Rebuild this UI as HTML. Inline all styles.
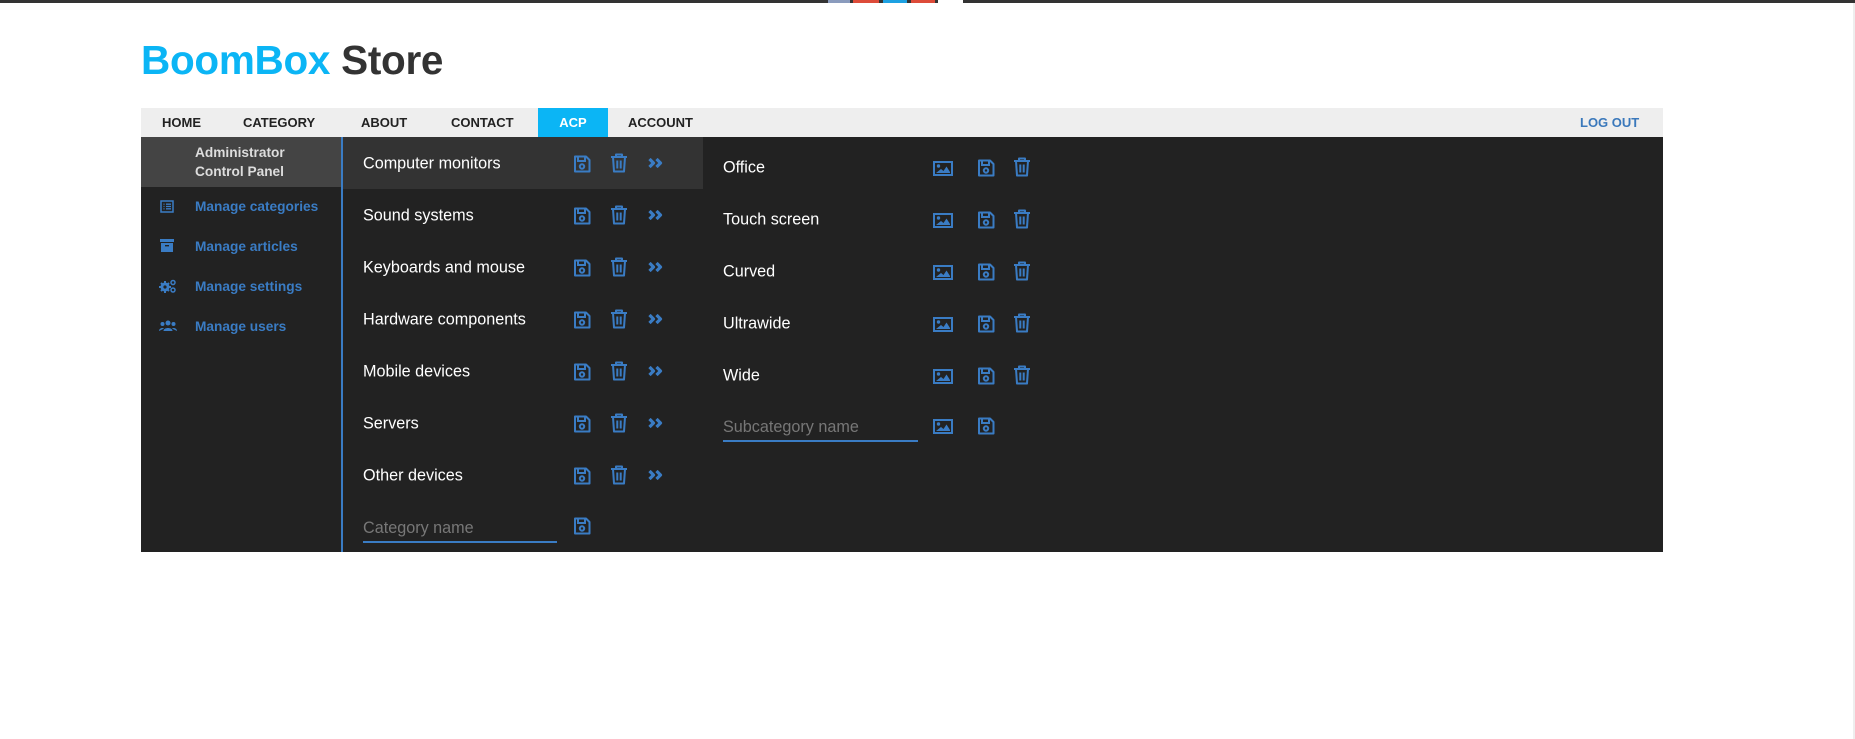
<!DOCTYPE html>
<html><head><meta charset="utf-8"><style>
*{margin:0;padding:0;box-sizing:border-box}
html,body{width:1855px;height:739px;overflow:hidden;background:#fff;font-family:"Liberation Sans",Arial,sans-serif}
.a{position:absolute}
.nav span{position:absolute;top:0;height:29px;line-height:29px;font-size:13px;font-weight:bold;color:#222}
.t{position:absolute;color:#fff;font-size:16.2px;transform:translateY(-50%)}
.sb{position:absolute;color:#3a7cc4;font-size:13.7px;font-weight:bold}
svg.i{position:absolute}
.ph{position:absolute;color:#777;font-size:16.2px}
.ul{position:absolute;height:2px;background:#3a7cc4}
</style></head><body>
<svg width="0" height="0" style="position:absolute"><defs>
<symbol id="sv" viewBox="0 0 18 18"><path d="M2 1.5h11l3.5 3.5v11.5h-14.5z" fill="none" stroke="#3a7cc4" stroke-width="2" stroke-linejoin="round"/><path d="M5 1.5v4.5h7v-4.5" fill="none" stroke="#3a7cc4" stroke-width="2"/><circle cx="9" cy="11.5" r="2.2" fill="none" stroke="#3a7cc4" stroke-width="2"/></symbol>
<symbol id="tr" viewBox="0 0 18 20"><path d="M1 4h16M6 4V1.5h6V4M3 4l1 14.5h10L15 4M7.3 7.5v8M10.7 7.5v8" fill="none" stroke="#3a7cc4" stroke-width="2" stroke-linejoin="round"/></symbol>
<symbol id="ch" viewBox="0 0 16 10"><path d="M1.5 1l4 4-4 4M8.5 1l4 4-4 4" fill="none" stroke="#3a7cc4" stroke-width="3.2" stroke-linejoin="round"/></symbol>
<symbol id="im" viewBox="0 0 20 15"><rect x="1" y="1" width="18" height="13" fill="none" stroke="#3a7cc4" stroke-width="2"/><circle cx="5.5" cy="5" r="1.7" fill="#3a7cc4"/><path d="M3 12l5-4 2.5 2 3-4.5L17 11v1z" fill="#3a7cc4"/></symbol>
</defs></svg>
<div class="a" style="left:0;top:0;width:828px;height:3px;background:#333"></div>
<div class="a" style="left:828px;top:0;width:22px;height:3px;background:#8a9bbd"></div>
<div class="a" style="left:850px;top:0;width:3px;height:3px;background:#333"></div>
<div class="a" style="left:853px;top:0;width:26px;height:3px;background:#dd4b39"></div>
<div class="a" style="left:879px;top:0;width:4px;height:3px;background:#333"></div>
<div class="a" style="left:883px;top:0;width:24px;height:3px;background:#1da1e2"></div>
<div class="a" style="left:907px;top:0;width:4px;height:3px;background:#333"></div>
<div class="a" style="left:911px;top:0;width:24px;height:3px;background:#dd4b39"></div>
<div class="a" style="left:935px;top:0;width:3px;height:3px;background:#333"></div>
<div class="a" style="left:963px;top:0;width:892px;height:3px;background:#333"></div>
<div class="a" style="left:1853px;top:3px;width:2px;height:736px;background:#eee"></div>

<div class="a" style="left:141px;top:36px;font-size:40.5px;font-weight:bold;line-height:48px;letter-spacing:-0.3px"><span style="color:#0bb5f5">BoomBox</span> <span style="color:#333">Store</span></div>

<div class="a nav" style="left:141px;top:108px;width:1522px;height:29px;background:#eee">
<span style="left:21px">HOME</span>
<span style="left:102px">CATEGORY</span>
<span style="left:220px">ABOUT</span>
<span style="left:310px">CONTACT</span>
<span style="left:397px;width:70px;background:#0bb5f5;color:#fff;text-align:center">ACP</span>
<span style="left:487px">ACCOUNT</span>
<span style="left:1439px;color:#3a78bb">LOG OUT</span>
</div>

<div class="a" style="left:141px;top:137px;width:1522px;height:415px;background:#222"></div>
<div class="a" style="left:141px;top:137px;width:200px;height:50px;background:#444"></div>
<div class="a" style="left:341px;top:137px;width:2px;height:415px;background:#3a7cc4"></div>
<div class="a" style="left:343px;top:137px;width:360px;height:52px;background:#333"></div>
<div class="a" style="left:195px;top:143px;color:#ddd;font-size:13.7px;font-weight:bold;line-height:19px">Administrator<br>Control Panel</div>

<svg class="i" style="left:160px;top:200px" width="14" height="13" viewBox="0 0 14 13"><rect x="1" y="1" width="12" height="11" fill="none" stroke="#3a7cc4" stroke-width="1.5"/><path d="M3.5 4.2h1M6 4.2h5M3.5 6.5h1M6 6.5h5M3.5 8.8h1M6 8.8h5" stroke="#3a7cc4" stroke-width="1.3"/></svg>
<div class="sb" style="left:195px;top:199px">Manage categories</div>
<svg class="i" style="left:160px;top:239px" width="14" height="13" viewBox="0 0 14 13"><rect x="0" y="0" width="14" height="3" fill="#3a7cc4"/><rect x="1" y="4" width="12" height="9" fill="#3a7cc4"/><rect x="5" y="6" width="4" height="1.4" fill="#222"/></svg>
<div class="sb" style="left:195px;top:239px">Manage articles</div>
<svg class="i" style="left:159px;top:279px" width="17" height="14" viewBox="0 0 17 14"><circle cx="6" cy="8" r="4.5" fill="#3a7cc4"/><path d="M6 2v12M0 8h12M2 4l8 8M10 4l-8 8" stroke="#3a7cc4" stroke-width="2"/><circle cx="6" cy="8" r="1.6" fill="#222"/><circle cx="14" cy="3.5" r="2" fill="none" stroke="#3a7cc4" stroke-width="1.5"/><circle cx="14" cy="11" r="2" fill="none" stroke="#3a7cc4" stroke-width="1.5"/></svg>
<div class="sb" style="left:195px;top:279px">Manage settings</div>
<svg class="i" style="left:159px;top:320px" width="18" height="11" viewBox="0 0 18 11"><circle cx="9" cy="3" r="2.5" fill="#3a7cc4"/><circle cx="3.5" cy="4" r="2" fill="#3a7cc4"/><circle cx="14.5" cy="4" r="2" fill="#3a7cc4"/><path d="M4.5 11c0-4 9-4 9 0z" fill="#3a7cc4"/><path d="M0 11c0-3 4-3.5 5-2.5M18 11c0-3-4-3.5-5-2.5" fill="#3a7cc4"/></svg>
<div class="sb" style="left:195px;top:319px">Manage users</div>

<div class="t" style="left:363px;top:164px">Computer monitors</div>
<div class="t" style="left:363px;top:216px">Sound systems</div>
<div class="t" style="left:363px;top:268px">Keyboards and mouse</div>
<div class="t" style="left:363px;top:320px">Hardware components</div>
<div class="t" style="left:363px;top:372px">Mobile devices</div>
<div class="t" style="left:363px;top:424px">Servers</div>
<div class="t" style="left:363px;top:476px">Other devices</div>
<div class="ph" style="left:363px;top:519px">Category name</div>
<div class="ul" style="left:363px;top:541px;width:194px"></div>
<svg class="i" style="left:573px;top:517px" width="18" height="18"><use href="#sv"/></svg>

<svg class="i" style="left:573px;top:155px" width="18" height="18"><use href="#sv"/></svg><svg class="i" style="left:610px;top:153px" width="18" height="20"><use href="#tr"/></svg><svg class="i" style="left:648px;top:158px" width="16" height="10"><use href="#ch"/></svg>
<svg class="i" style="left:573px;top:207px" width="18" height="18"><use href="#sv"/></svg><svg class="i" style="left:610px;top:205px" width="18" height="20"><use href="#tr"/></svg><svg class="i" style="left:648px;top:210px" width="16" height="10"><use href="#ch"/></svg>
<svg class="i" style="left:573px;top:259px" width="18" height="18"><use href="#sv"/></svg><svg class="i" style="left:610px;top:257px" width="18" height="20"><use href="#tr"/></svg><svg class="i" style="left:648px;top:262px" width="16" height="10"><use href="#ch"/></svg>
<svg class="i" style="left:573px;top:311px" width="18" height="18"><use href="#sv"/></svg><svg class="i" style="left:610px;top:309px" width="18" height="20"><use href="#tr"/></svg><svg class="i" style="left:648px;top:314px" width="16" height="10"><use href="#ch"/></svg>
<svg class="i" style="left:573px;top:363px" width="18" height="18"><use href="#sv"/></svg><svg class="i" style="left:610px;top:361px" width="18" height="20"><use href="#tr"/></svg><svg class="i" style="left:648px;top:366px" width="16" height="10"><use href="#ch"/></svg>
<svg class="i" style="left:573px;top:415px" width="18" height="18"><use href="#sv"/></svg><svg class="i" style="left:610px;top:413px" width="18" height="20"><use href="#tr"/></svg><svg class="i" style="left:648px;top:418px" width="16" height="10"><use href="#ch"/></svg>
<svg class="i" style="left:573px;top:467px" width="18" height="18"><use href="#sv"/></svg><svg class="i" style="left:610px;top:465px" width="18" height="20"><use href="#tr"/></svg><svg class="i" style="left:648px;top:470px" width="16" height="10"><use href="#ch"/></svg>

<div class="t" style="left:723px;top:168px">Office</div>
<div class="t" style="left:723px;top:220px">Touch screen</div>
<div class="t" style="left:723px;top:272px">Curved</div>
<div class="t" style="left:723px;top:324px">Ultrawide</div>
<div class="t" style="left:723px;top:376px">Wide</div>
<div class="ph" style="left:723px;top:418px">Subcategory name</div>
<div class="ul" style="left:723px;top:440px;width:195px"></div>

<svg class="i" style="left:933px;top:161px" width="20" height="15"><use href="#im"/></svg><svg class="i" style="left:977px;top:159px" width="18" height="18"><use href="#sv"/></svg><svg class="i" style="left:1013px;top:157px" width="18" height="20"><use href="#tr"/></svg>
<svg class="i" style="left:933px;top:213px" width="20" height="15"><use href="#im"/></svg><svg class="i" style="left:977px;top:211px" width="18" height="18"><use href="#sv"/></svg><svg class="i" style="left:1013px;top:209px" width="18" height="20"><use href="#tr"/></svg>
<svg class="i" style="left:933px;top:265px" width="20" height="15"><use href="#im"/></svg><svg class="i" style="left:977px;top:263px" width="18" height="18"><use href="#sv"/></svg><svg class="i" style="left:1013px;top:261px" width="18" height="20"><use href="#tr"/></svg>
<svg class="i" style="left:933px;top:317px" width="20" height="15"><use href="#im"/></svg><svg class="i" style="left:977px;top:315px" width="18" height="18"><use href="#sv"/></svg><svg class="i" style="left:1013px;top:313px" width="18" height="20"><use href="#tr"/></svg>
<svg class="i" style="left:933px;top:369px" width="20" height="15"><use href="#im"/></svg><svg class="i" style="left:977px;top:367px" width="18" height="18"><use href="#sv"/></svg><svg class="i" style="left:1013px;top:365px" width="18" height="20"><use href="#tr"/></svg>
<svg class="i" style="left:933px;top:419px" width="20" height="15"><use href="#im"/></svg><svg class="i" style="left:977px;top:417px" width="18" height="18"><use href="#sv"/></svg>
</body></html>
